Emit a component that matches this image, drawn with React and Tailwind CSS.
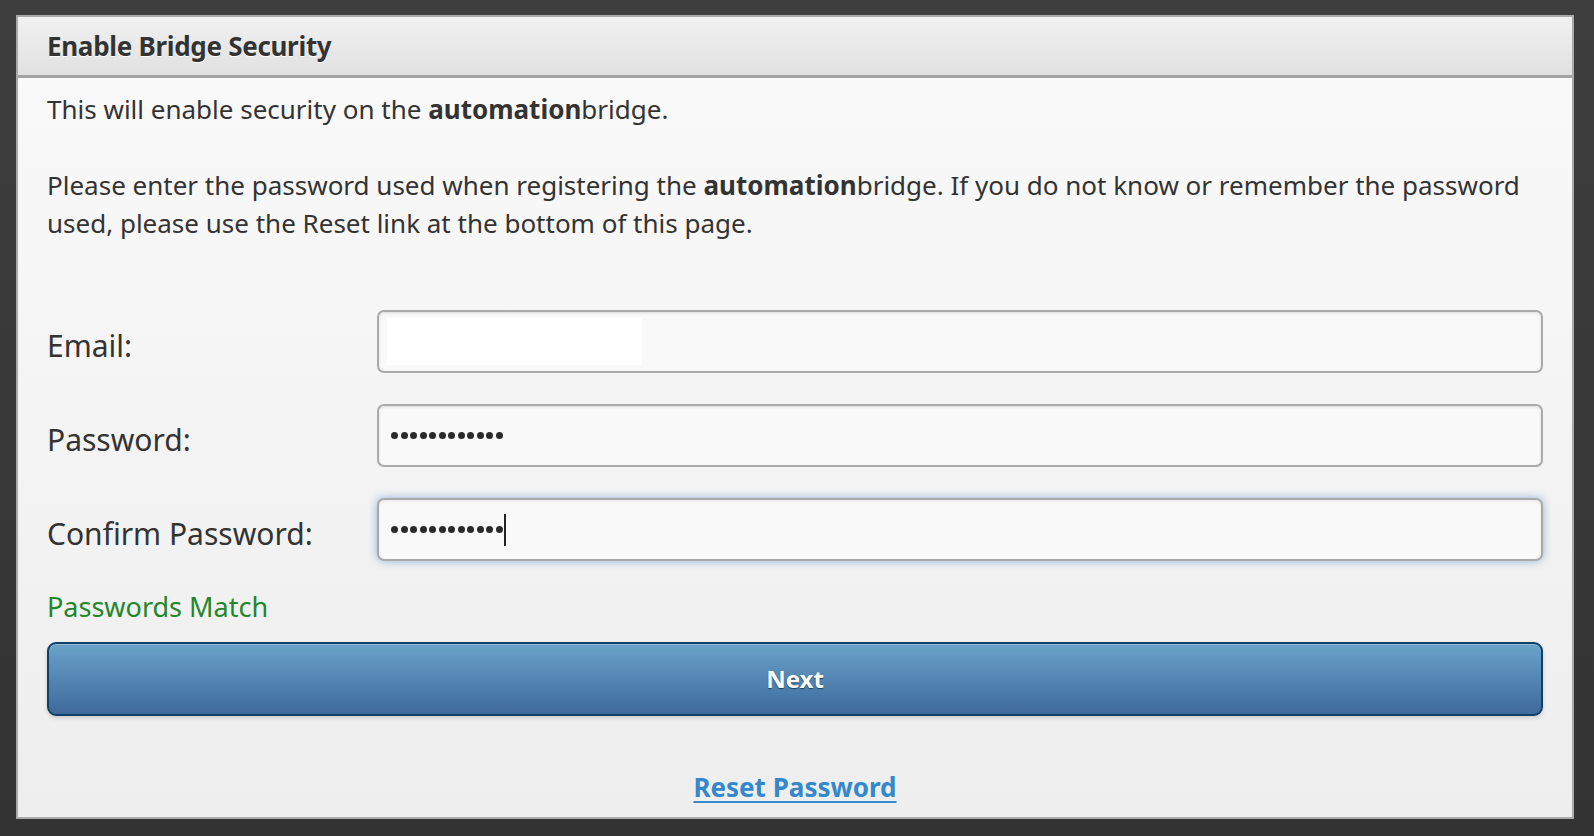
export default function App() {
    const font = {fontFamily: '"Noto Sans", "Open Sans", sans-serif'};

    return (
        <div
            className="min-h-screen w-full bg-gradient-to-b from-[#3e3e3e] to-[#333333] pt-[15px] pl-[16px] pr-[20px] pb-[16px]"
            style={font}
        >
            <div className="border-2 border-[#a9a9a9] bg-gradient-to-b from-[#fafafa] to-[#eeeeee] text-[#333]">
                <div className="h-[61px] flex items-center pl-[29px] bg-gradient-to-b from-[#f1f1f1] to-[#e1e1e1] border-b-[3px] border-[#a3a3a3]">
                    <h1 className="text-[26px] font-bold tracking-[-0.3px] [text-shadow:0_1px_0_#fff]">
                        Enable Bridge Security
                    </h1>
                </div>

                <div className="px-[29px] pt-[12px] pb-[11px]">
                    <p className="text-[26px] leading-[38px]">
                        This will enable security on the <b>automation</b>bridge.
                    </p>
                    <p className="text-[26px] leading-[38px] mt-[38px]">
                        Please enter the password used when registering the <b>automation</b>bridge. If you do not know or remember the password
                        used, please use the Reset link at the bottom of this page.
                    </p>

                    <div className="mt-[68px] flex flex-col gap-[31px]">
                        <FormRow label="Email:">
                            <div className="h-[47px] w-[255px] bg-white ml-[8px]" />
                        </FormRow>
                        <FormRow label="Password:">
                            <Dots />
                        </FormRow>
                        <FormRow label="Confirm Password:" focused>
                            <Dots />
                            <span className="w-[2px] h-[32px] bg-[#222] ml-[1px]" />
                        </FormRow>
                    </div>

                    <p className="mt-[27px] text-[27px] leading-[38px] text-[#22862a]">Passwords Match</p>

                    <button className="mt-[16px] w-full h-[74px] rounded-[9px] border-2 border-[#123f66] bg-gradient-to-b from-[#6aa2c9] to-[#3e6a9c] shadow-[inset_0_1px_0_#8ebbdb,0_2px_4px_rgba(0,0,0,0.15)] text-white text-[24px] font-bold [text-shadow:0_1px_1px_#1d3f60]">
                        Next
                    </button>

                    <div className="mt-[52px] text-center">
                        <a href="#" className="text-[26px] leading-[38px] font-bold text-[#3488cc] underline underline-offset-[4px] decoration-2">
                            Reset Password
                        </a>
                    </div>
                </div>
            </div>
        </div>
    );
}

function Dots() {
    return (
        <div className="flex items-center gap-[2.5px] pl-[12px]">
            {Array.from({length: 12}).map((_, i) => (
                <span key={i} className="w-[7px] h-[7px] rounded-full bg-[#2a2a2a]" />
            ))}
        </div>
    );
}

function FormRow({label, focused, children}) {
    return (
        <div className="flex items-center">
            <label className="w-[330px] shrink-0 text-[30px] pt-[7px]">{label}</label>
            <div
                className={`flex-1 h-[63px] rounded-[7px] border-2 bg-[#f9f9f9] flex items-center ${
                    focused
                        ? "border-[#a9a9a9] shadow-[0_0_10px_#8fb4dc,inset_0_1px_3px_rgba(0,0,0,0.08)]"
                        : "border-[#aaaaaa] shadow-[inset_0_1px_3px_rgba(0,0,0,0.12)]"
                }`}
            >
                {children}
            </div>
        </div>
    );
}
